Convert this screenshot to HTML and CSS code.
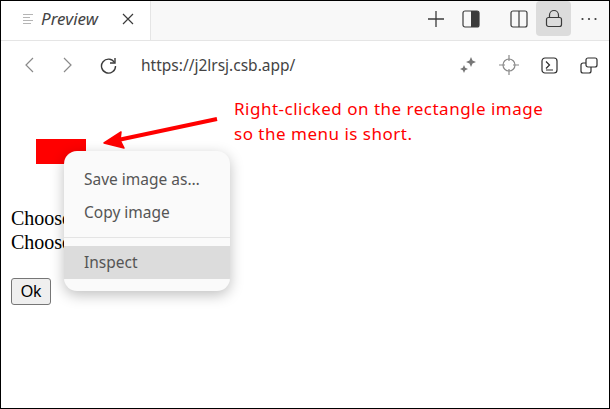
FILE: index.html
```html
<!DOCTYPE html>
<html lang="en">
<head>
  <meta charset="UTF-8">
  <title>Preview</title>
  <link rel="stylesheet" href="styles.css">
</head>
<body>
  <div class="frame">
    <div class="tabbar">
      <div class="tab">
        <svg class="tab-icon" width="12" height="12" viewBox="0 0 12 12" fill="none" stroke="#b5b5b5" stroke-width="1">
          <path d="M0 1.500h10M0 4.500h7M0 7.500h10M0 10.500h8"/>
        </svg>
        <span class="tab-title">Preview</span>
        <svg class="tab-close" width="12" height="12" viewBox="0 0 12 12" fill="none" stroke="#3b3b3b" stroke-width="1.200">
          <path d="M1 1l10 10M11 1L1 11"/>
        </svg>
      </div>
      <div class="tab-actions">
        <button class="tab-btn add">
          <svg width="18" height="18" viewBox="0 0 18 18" fill="none" stroke="#3b3b3b" stroke-width="1.300"><path d="M9 1v16M1 9h16"/></svg>
        </button>
        <button class="tab-btn panel">
          <svg width="18" height="18" viewBox="0 0 18 18"><rect x="1" y="1" width="16" height="16" rx="2" fill="none" stroke="#3b3b3b" stroke-width="1.200"/><path d="M9 1h6a2 2 0 0 1 2 2v12a2 2 0 0 1-2 2H9z" fill="#3b3b3b"/></svg>
        </button>
        <button class="tab-btn split">
          <svg width="18" height="18" viewBox="0 0 18 18" fill="none" stroke="#3b3b3b" stroke-width="1.200"><rect x="1" y="1" width="16" height="16" rx="2"/><path d="M9 1v16"/></svg>
        </button>
        <button class="tab-btn lock">
          <svg width="18" height="19" viewBox="0 0 18 19" fill="none" stroke="#3b3b3b" stroke-width="1.200"><rect x="1.500" y="8.500" width="15" height="9" rx="2"/><path d="M4.500 8.500V6a4.500 4.500 0 0 1 9 0v2.500"/></svg>
        </button>
        <button class="tab-btn more">
          <svg width="18" height="4" viewBox="0 0 18 4" fill="#3b3b3b"><circle cx="2.500" cy="2" r="1.100"/><circle cx="9" cy="2" r="1.100"/><circle cx="15.500" cy="2" r="1.100"/></svg>
        </button>
      </div>
    </div>

    <div class="toolbar">
      <svg class="nav back" width="10" height="16" viewBox="0 0 10 16" fill="none" stroke="#8a8a8a" stroke-width="1.200"><path d="M9 1L2 8l7 7"/></svg>
      <svg class="nav forward" width="10" height="16" viewBox="0 0 10 16" fill="none" stroke="#8a8a8a" stroke-width="1.200"><path d="M1 1l7 7-7 7"/></svg>
      <svg class="nav reload" width="17" height="17" viewBox="0 0 17 17" fill="none" stroke="#3b3b3b" stroke-width="1.400"><path d="M14.500 5.500A7 7 0 1 0 15.500 9"/><path d="M15 1v5h-5"/></svg>
      <span class="url">https://j2lrsj.csb.app/</span>
      <div class="tools">
        <svg width="18" height="18" viewBox="0 0 18 18" fill="#777"><path d="M12 1l1.500 3.500L17 6l-3.500 1.500L12 11l-1.500-3.500L7 6l3.500-1.500zM5 9l1.200 2.800L9 13l-2.800 1.200L5 17l-1.200-2.800L1 13l2.800-1.200z"/></svg>
        <svg width="20" height="20" viewBox="0 0 20 20" fill="none" stroke="#8a8a8a" stroke-width="1.200"><circle cx="10" cy="10" r="6"/><path d="M10 0v6M10 14v6M0 10h6M14 10h6"/></svg>
        <svg width="17" height="17" viewBox="0 0 17 17" fill="none" stroke="#2e2e2e" stroke-width="1.200"><rect x="1" y="1" width="15" height="15" rx="3"/><path d="M5 4.500l3.500 3.500L5 11.500M5 13h7"/></svg>
        <svg width="18" height="17" viewBox="0 0 18 17" fill="none" stroke="#2e2e2e" stroke-width="1.200"><rect x="6" y="1" width="11" height="9" rx="2"/><path d="M6 6H3a2 2 0 0 0-2 2v6a2 2 0 0 0 2 2h6a2 2 0 0 0 2-2v-4"/></svg>
      </div>
    </div>

    <div class="content">
      <div class="red-rect"></div>
      <p class="choose">Choose<br>Choose</p>
      <button class="ok">Ok</button>

      <p class="note">Right-clicked on the rectangle image<br>so the menu is short.</p>
      <svg class="arrow" width="120" height="40" viewBox="0 0 120 40">
        <path d="M116 2L17 23" stroke="#ff0000" stroke-width="4" fill="none"/>
        <path d="M3 26L20 15 19 23 23 31z" fill="#ff0000" stroke="#ff0000" stroke-width="1.500" stroke-linejoin="round"/>
      </svg>

      <div class="menu">
        <div class="menu-item">Save image as…</div>
        <div class="menu-item">Copy image</div>
        <div class="menu-sep"></div>
        <div class="menu-item active">Inspect</div>
      </div>
    </div>
  </div>
</body>
</html>
```

FILE: styles.css
```css
* { box-sizing: border-box; }
html, body { margin: 0; height: 100%; }
body { background: #fff; overflow: hidden; }
.frame { width: 610px; height: 409px; border: 1px solid #000; display: flex; flex-direction: column; font-family: "Noto Sans", "Open Sans", sans-serif; }

.tabbar { height: 40px; flex: none; display: flex; justify-content: space-between; background: #f8f8f8; border-bottom: 1px solid #e5e5e5; }
.tab { width: 150px; height: 39px; display: flex; align-items: center; background: #fff; border-right: 1px solid #e5e5e5; padding: 0 0 4px 22px; }
.tab-title { font-size: 17px; font-style: italic; color: #444; margin-left: 6px; width: 81px; }
.tab-actions { display: flex; align-items: flex-start; padding-right: 3px; }
.tab-btn { width: 35px; height: 35px; border: 0; border-radius: 4px; background: none; padding: 0; display: flex; align-items: center; justify-content: center; }
.tab-btn.panel { margin-right: 13px; }
.tab-btn.lock { background: #dcdcdc; }

.toolbar { height: 48px; flex: none; display: flex; align-items: center; padding: 0 11px 0 23px; }
.nav { flex: none; }
.forward { margin-left: 29px; }
.reload { margin-left: 27px; }
.url { font-size: 15.500px; color: #444; margin-left: 24px; }
.tools { margin-left: auto; display: flex; align-items: center; gap: 22px; }

.content { position: relative; flex: 1; padding: 50px 0 0 10px; }
.red-rect { width: 50px; height: 25px; margin-left: 25px; background: #ff0000; }
.choose { margin: 42px 0 0; font-family: "Liberation Serif", serif; font-size: 20px; line-height: 24px; color: #000; }
.ok { display: block; width: 40px; height: 27px; margin-top: 24px; padding: 0; font-family: "Liberation Sans", sans-serif; font-size: 16px; color: #000; background: #efefef; border: 1px solid #767676; border-radius: 3px; }

.note { position: absolute; left: 233px; top: 7px; margin: 0; font-size: 17px; letter-spacing: .5px; line-height: 25px; color: #ff0000; }
.arrow { position: absolute; left: 100px; top: 28px; }

.menu { position: absolute; left: 63px; top: 62px; width: 166px; height: 140px; padding-top: 12px; background: #fafafa; border-radius: 13px; box-shadow: 0 4px 14px rgba(0,0,0,.25); overflow: hidden; }
.menu-item { height: 33px; line-height: 33px; padding-left: 20px; font-size: 15.500px; color: #555; }
.menu-sep { height: 1px; margin-top: 8px; background: #e4e4e4; }
.menu-item.active { margin-top: 8px; background: #dcdcdc; }
```
